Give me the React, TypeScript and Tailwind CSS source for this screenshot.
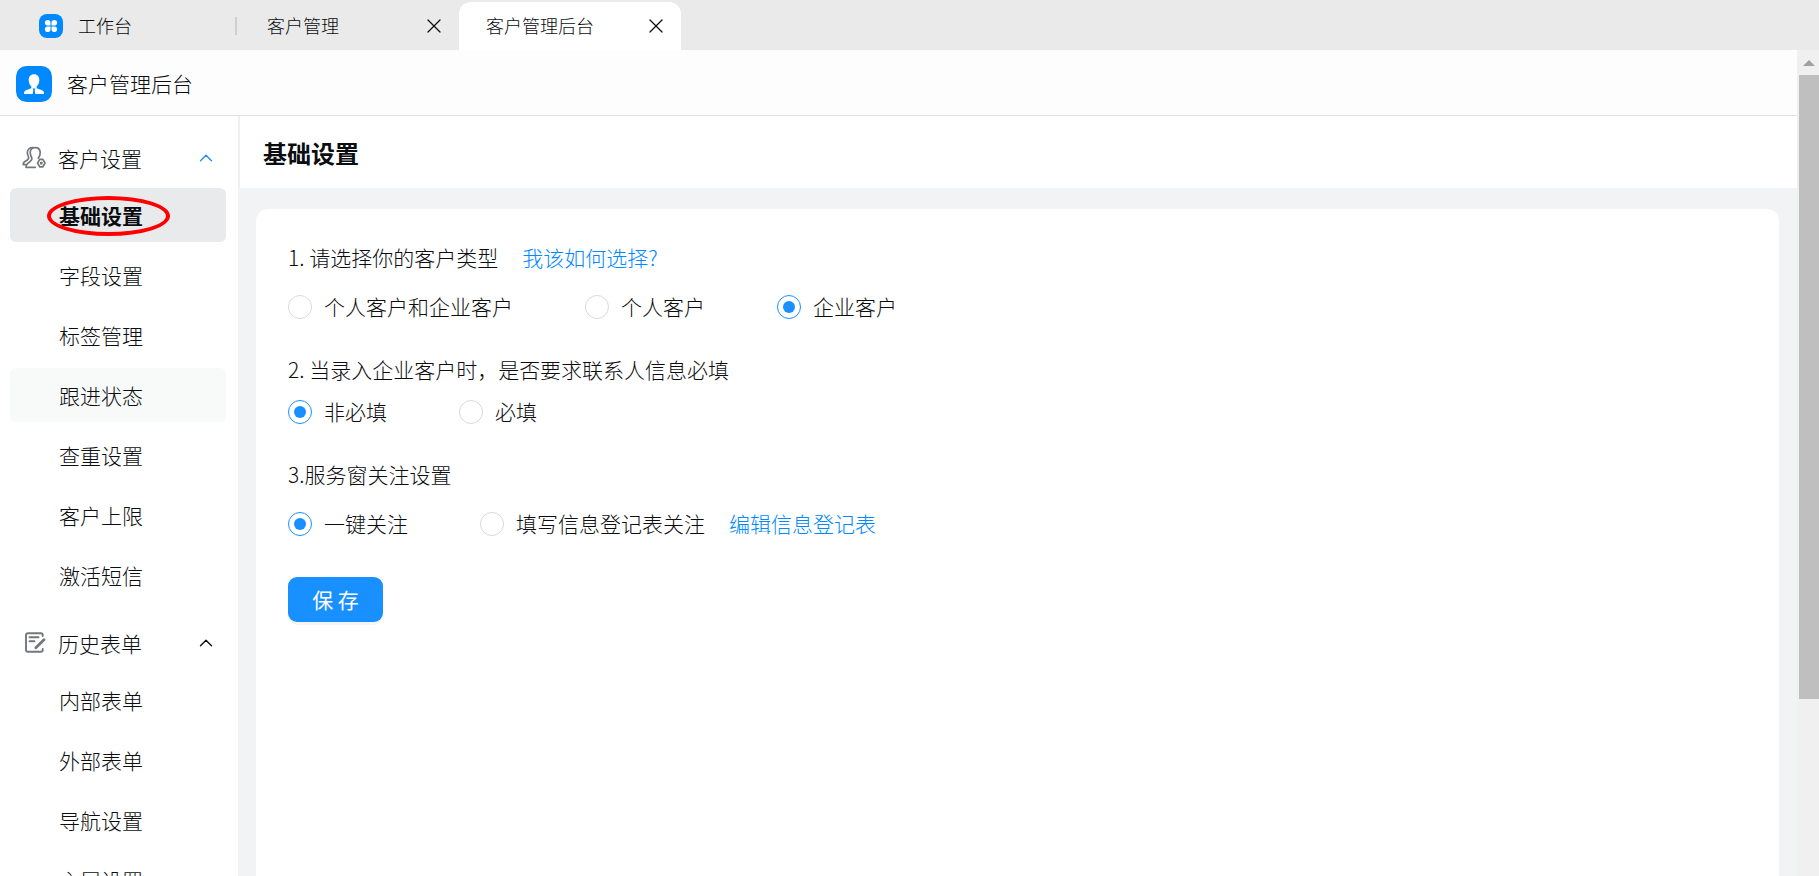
import { useState } from "react";
import clsx from "clsx";
import { ChevronUp, X } from "lucide-react";

const customerItems = ["基础设置", "字段设置", "标签管理", "跟进状态", "查重设置", "客户上限", "激活短信"];
const formItems = ["内部表单", "外部表单", "导航设置", "主属设置"];

function WorkbenchIcon() {
  return (
    <svg className="h-6 w-6" viewBox="0 0 24 24" aria-hidden="true">
      <rect width="24" height="24" rx="8" fill="#0089ff" />
      <g fill="#fff">
        <path d="M11.500 11.500H8.700A2.800 2.800 0 1 1 11.500 8.700z" />
        <path d="M12.500 11.500h2.800a2.800 2.800 0 1 0-2.800-2.800z" />
        <path d="M11.500 12.500H8.700a2.800 2.800 0 1 0 2.800 2.800z" />
        <path d="M12.500 12.500h2.800a2.800 2.800 0 1 1-2.800 2.800z" />
      </g>
    </svg>
  );
}

function CustomerLogo() {
  return (
    <svg className="h-9 w-9" viewBox="0 0 36 36" aria-hidden="true">
      <rect width="36" height="36" rx="10.5" fill="#0089ff" />
      <path
        d="M18 8.300c3.400 0 5.300 2.300 5.300 5.600 0 2.600-1 5-2.600 6.400v1.900l5.300 2c1.500.6 2 1.700 2 3.800h-8.700l-.6-4 .7-1.400h-2.800l.7 1.400-.6 4H8c0-2.100.5-3.200 2-3.800l5.300-2v-1.900c-1.600-1.400-2.600-3.800-2.600-6.400 0-3.300 1.900-5.600 5.300-5.600z"
        fill="#fff"
      />
    </svg>
  );
}

function CustomerIcon() {
  return (
    <svg className="h-6 w-6" viewBox="0 0 24 24" fill="none" stroke="#74777b" strokeWidth="1.700" strokeLinejoin="round" strokeLinecap="round" aria-hidden="true">
      <path d="M16.300 12.300c1.300-1.700 2-3.800 1.900-6C18 3.500 16 1.600 13.200 1.600c-3.200 0-5.100 2.100-5 5.200.1 2 .8 3.300 1.400 4.600.6 1.400.2 2.600-1.100 3.700l-3.200 2.700c-1.200 1.100-1.400 2-1.200 3.500h9.200" />
      <path d="M11.300 1.700C7.700 1.500 5.300 3.300 5.300 6.600c0 1.900.8 3 1.200 4.300.4 1.400-.1 2.400-1.500 3.300L2.500 15.800C1.300 16.700 1 17.400 1.200 18.600h2.600" />
      <path d="M17.700 13.400h3.200l2.100 3.600-2.100 3.800h-3.200L15.600 17z" />
      <circle cx="19.300" cy="17.100" r="0.700" />
    </svg>
  );
}

function FormIcon() {
  return (
    <svg className="h-6 w-6" viewBox="0 0 24 24" fill="none" stroke="#74777b" strokeWidth="1.900" strokeLinejoin="round" strokeLinecap="round" aria-hidden="true">
      <path d="M20.700 5V4a1.800 1.800 0 0 0-1.800-1.800H5.800A1.800 1.800 0 0 0 4 4v15a1.800 1.800 0 0 0 1.800 1.800h13.100a1.800 1.800 0 0 0 1.800-1.800v-1" />
      <path d="M7.500 6.200h9M7.500 10.200h5" />
      <path d="M13.800 16.700 22 8.800" strokeWidth="2.800" />
    </svg>
  );
}

function MenuGroup({ title, icon, items, active, hovered, highlight, onSelect }: any) {
  const [open, setOpen] = useState(true);

  return (
    <div>
      <button
        type="button"
        className="flex h-[54px] w-full items-center pb-0.5 pl-3 pr-[9px] text-left"
        onClick={() => setOpen(!open)}
      >
        {icon}
        <span className="ml-3 flex-1">{title}</span>
        <ChevronUp className={clsx("h-[22px] w-[22px]", highlight && "text-[#1890ff]", !open && "rotate-180")} strokeWidth={1.5} />
      </button>
      {open && (
        <ul className="mt-0.5 flex flex-col gap-1.5">
          {items.map((item: string) => (
            <li key={item} className="relative">
              <button
                type="button"
                onClick={() => onSelect(item)}
                className={clsx(
                  "flex h-[54px] w-full items-center rounded-md pl-[49px] hover:bg-[#f8f9f9]",
                  item === active && "bg-[#e9eaec] font-bold",
                  item === hovered && "bg-[#f8f9f9]"
                )}
              >
                {item}
              </button>
              {item === "基础设置" && (
                <span className="pointer-events-none absolute left-[37px] top-2 h-10 w-[123px] rounded-[50%] border-4 border-[#fe0000]" />
              )}
            </li>
          ))}
        </ul>
      )}
    </div>
  );
}

function RadioRow({ name, options, value, onChange, children }: any) {
  return (
    <div className="flex h-8 items-center gap-[72px]">
      {options.map((option: string, i: number) => (
        <div key={option} className="flex items-center gap-6">
          <label className="flex items-center gap-3">
            <input
              type="radio"
              name={name}
              checked={option === value}
              onChange={() => onChange(option)}
              className="grid h-6 w-6 appearance-none place-items-center rounded-full border border-[#d9d9d9] bg-white before:h-3 before:w-3 before:rounded-full checked:border-[#1890ff] checked:before:bg-[#1890ff]"
            />
            <span className="pb-0.5">{option}</span>
          </label>
          {i === options.length - 1 && children}
        </div>
      ))}
    </div>
  );
}

export default function App() {
  const [active, setActive] = useState("基础设置");
  const [customerType, setCustomerType] = useState("企业客户");
  const [required, setRequired] = useState("非必填");
  const [follow, setFollow] = useState("一键关注");

  return (
    <div className="flex h-screen flex-col overflow-hidden bg-white font-['Noto_Sans_CJK_SC','Noto_Sans',sans-serif] text-[21px] leading-9 font-light text-[#0b0d10]">
      <nav className="flex h-[50px] shrink-0 items-end bg-[#eaeaea] text-lg">
        <div className="flex h-12 w-[237px] items-center pl-[39px]">
          <WorkbenchIcon />
          <span className="ml-[15px] flex-1 pb-0.5">工作台</span>
          <span className="h-[18px] w-0.5 bg-[#d0d0d0]" />
        </div>
        <div className="flex h-12 w-[222px] items-center justify-between pl-[30px] pr-[13px]">
          <span className="pb-0.5">客户管理</span>
          <button type="button" aria-label="关闭客户管理">
            <X className="h-6 w-6" strokeWidth={1.2} />
          </button>
        </div>
        <div className="flex h-12 w-[222px] items-center justify-between rounded-t-xl bg-white pl-[27px] pr-[13px]">
          <span className="pb-0.5">客户管理后台</span>
          <button type="button" aria-label="关闭客户管理后台">
            <X className="h-6 w-6" strokeWidth={1.2} />
          </button>
        </div>
      </nav>

      <div className="flex min-h-0 flex-1">
        <div className="flex min-w-0 flex-1 flex-col">
          <header className="flex h-[66px] shrink-0 items-center border-b border-[#e1e2e3] bg-[#fdfdfd] pl-4 pt-0.5">
            <CustomerLogo />
            <span className="ml-[15px] pb-0.5">客户管理后台</span>
          </header>

          <div className="flex min-h-0 flex-1">
            <aside className="flex w-[238px] shrink-0 flex-col gap-[15px] overflow-hidden pt-4 pl-2.5 pr-3">
              <MenuGroup
                title="客户设置"
                icon={<CustomerIcon />}
                items={customerItems}
                active={active}
                hovered="跟进状态"
                highlight
                onSelect={setActive}
              />
              <MenuGroup title="历史表单" icon={<FormIcon />} items={formItems} active={active} onSelect={setActive} />
            </aside>

            <main className="flex min-w-0 flex-1 flex-col bg-[#f2f3f5]">
              <div className="flex h-[72px] shrink-0 items-center border-l-2 border-[#f0f0f2] bg-white pl-[23px] pt-0.5">
                <h1 className="text-2xl font-bold">基础设置</h1>
              </div>
              <section className="mx-[18px] mt-[21px] flex-1 rounded-t-xl bg-white px-8 pt-[30px]">
                <h2 className="mb-4 flex gap-6">
                  1. 请选择你的客户类型
                  <a href="#help" className="text-[#0089ff]">我该如何选择?</a>
                </h2>
                <RadioRow
                  name="customerType"
                  options={["个人客户和企业客户", "个人客户", "企业客户"]}
                  value={customerType}
                  onChange={setCustomerType}
                />

                <h2 className="mt-7 mb-[9px]">2. 当录入企业客户时，是否要求联系人信息必填</h2>
                <RadioRow name="required" options={["非必填", "必填"]} value={required} onChange={setRequired} />

                <h2 className="mt-7 mb-4">3.服务窗关注设置</h2>
                <RadioRow name="follow" options={["一键关注", "填写信息登记表关注"]} value={follow} onChange={setFollow}>
                  <a href="#form" className="pb-0.5 text-[#0089ff]">编辑信息登记表</a>
                </RadioRow>

                <button
                  type="button"
                  className="mt-[37px] flex h-[45px] w-[95px] items-center justify-center rounded-[9px] bg-[#1890ff] pb-0.5 font-normal text-white shadow-[0_3px_0_rgba(0,0,0,0.04)]"
                >
                  保 存
                </button>
              </section>
            </main>
          </div>
        </div>

        {/* scrollbar */}
        <div className="flex w-[22px] shrink-0 flex-col bg-[#f0f0f0] pl-0.5">
          <div className="flex h-[25px] items-center justify-center">
            <svg className="h-1.5 w-3" viewBox="0 0 12 6" aria-hidden="true">
              <path d="M6 0l6 6H0z" fill="#a0a0a0" />
            </svg>
          </div>
          <div className="h-[75.5%] bg-[#bfbfbf]" />
        </div>
      </div>
    </div>
  );
}
